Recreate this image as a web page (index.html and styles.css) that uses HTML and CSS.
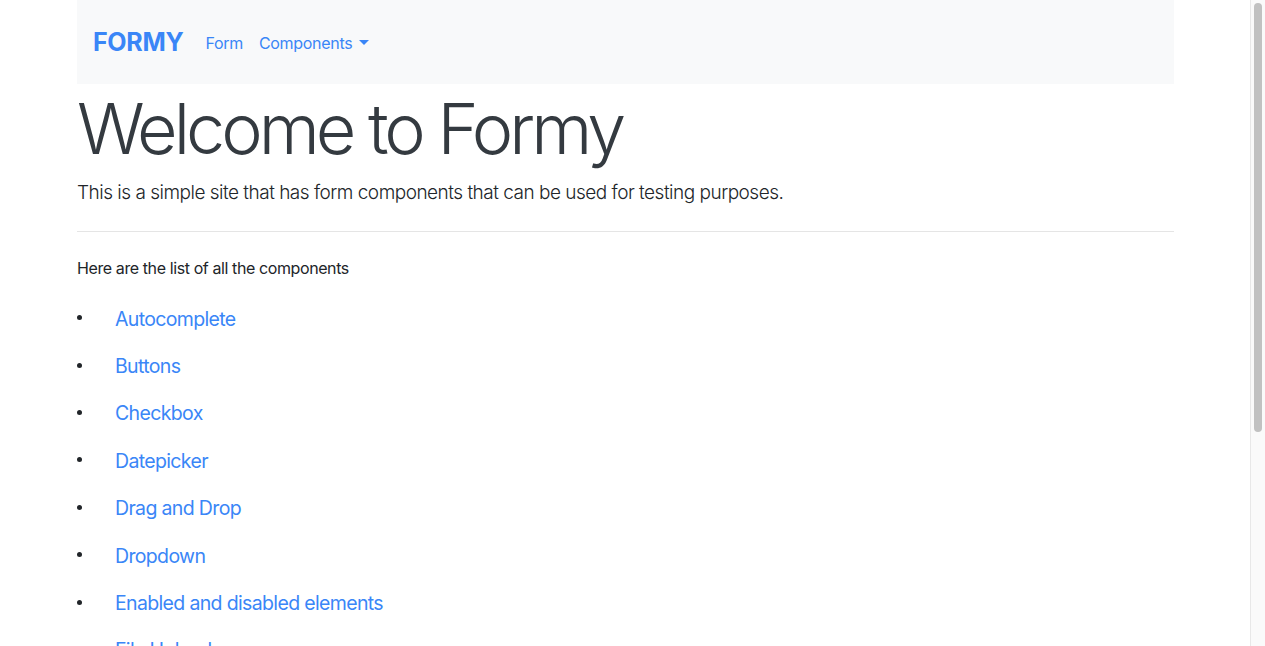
FILE: index.html
```html
<!DOCTYPE html>
<html lang="en">
<head>
<meta charset="utf-8">
<title>Formy</title>
<link rel="stylesheet" href="styles.css">
</head>
<body>
<div class="container">
  <nav class="navbar">
    <a class="brand" href="#">FORMY</a>
    <a class="nav-link" href="#">Form</a>
    <a class="nav-link dropdown" href="#">Components<span class="caret"></span></a>
  </nav>
  <div class="jumbo">
    <h1 class="display">Welcome to Formy</h1>
    <p class="lead">This is a simple site that has form components that can be used for testing purposes.</p>
    <hr class="rule">
    <p class="intro">Here are the list of all the components</p>
    <ul class="comp-list">
      <li><a href="#">Autocomplete</a></li>
      <li><a href="#">Buttons</a></li>
      <li><a href="#">Checkbox</a></li>
      <li><a href="#">Datepicker</a></li>
      <li><a href="#">Drag and Drop</a></li>
      <li><a href="#">Dropdown</a></li>
      <li><a href="#">Enabled and disabled elements</a></li>
      <li><a href="#">File Upload</a></li>
      <li><a href="#">Key and Mouse Press</a></li>
      <li><a href="#">Modal</a></li>
      <li><a href="#">Page Scroll</a></li>
      <li><a href="#">Radio Button</a></li>
      <li><a href="#">Switch Window</a></li>
      <li><a href="#">Complete Web Form</a></li>
    </ul>
  </div>
</div>
<div class="scrollbar"><div class="scroll-thumb"></div></div>
</body>
</html>
```

FILE: styles.css
```css
html, body {
  margin: 0;
  padding: 0;
}
body {
  font-family: Inter, "Noto Sans", "Liberation Sans", sans-serif;
  color: #212529;
  background: #fff;
}
a {
  color: #3a86f7;
  text-decoration: none;
}
.scrollbar {
  position: fixed;
  top: 0;
  right: 0;
  width: 14px;
  height: 100vh;
  background: #fafafa;
  border-left: 1px solid #e8e8e8;
}
.scroll-thumb {
  margin: 3px 0 0 3px;
  width: 8px;
  height: 429px;
  border-radius: 4px;
  background: #c1c1c1;
}
.container {
  width: 1097px;
  margin-left: 77px;
}
.navbar {
  height: 84px;
  background: #f8f9fa;
  display: flex;
  align-items: center;
  padding-left: 16px;
  box-sizing: border-box;
}
.brand {
  font-size: 25px;
  font-weight: 700;
  letter-spacing: -0.3px;
  margin-right: 22px;
}
.nav-link {
  font-size: 16px;
  letter-spacing: -0.3px;
  margin-right: 16px;
  padding-top: 2px;
}
.dropdown {
  display: inline-flex;
  align-items: center;
}
.caret {
  display: inline-block;
  margin-left: 7px;
  width: 0;
  height: 0;
  border-left: 5px solid transparent;
  border-right: 5px solid transparent;
  border-top: 5px solid #3a86f7;
  margin-top: -2px;
}
.display {
  font-size: 70px;
  font-weight: 300;
  line-height: 86px;
  margin: 0;
  padding-top: 2px;
  color: #343a40;
  letter-spacing: -4px;
}
.lead {
  font-size: 19px;
  font-weight: 300;
  letter-spacing: -0.5px;
  margin: 6px 0 0;
  line-height: 30px;
}
.rule {
  border: 0;
  border-top: 1px solid rgba(0, 0, 0, 0.1);
  margin: 23px 0 0;
}
.intro {
  font-size: 16px;
  letter-spacing: -0.4px;
  margin: 24px 0 0;
  line-height: 24px;
}
.comp-list {
  list-style: none;
  margin: 15px 0 0;
  padding: 0;
}
.comp-list li {
  display: flex;
  align-items: center;
  height: 47.4px;
}
.comp-list li::before {
  content: "";
  width: 5px;
  height: 5px;
  border-radius: 50%;
  background: #212529;
  margin: -2px 33px 0 0;
}
.comp-list a {
  font-size: 19.5px;
  letter-spacing: -0.65px;
}
```
